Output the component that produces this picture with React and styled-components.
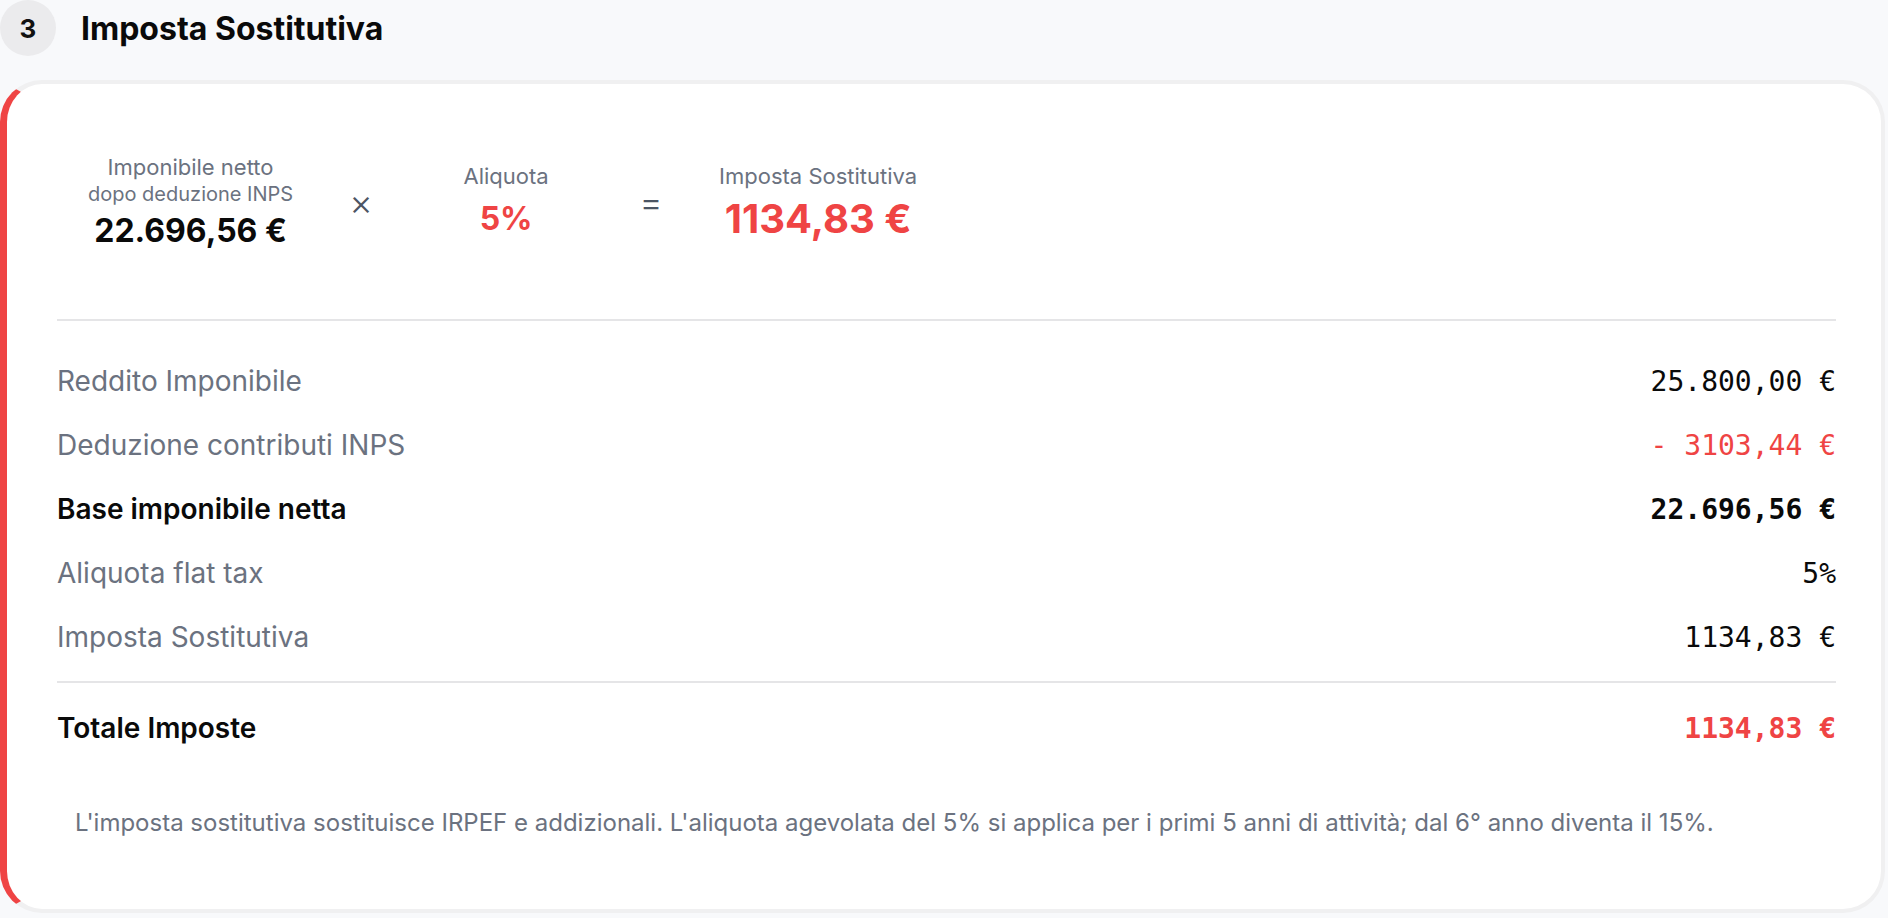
import React from 'react';
import styled, { createGlobalStyle } from 'styled-components';

const GlobalStyle = createGlobalStyle`
  html, body {
    margin: 0;
    padding: 0;
    background: #f8f9fb;
    font-family: Inter, "Noto Sans", sans-serif;
  }
`;

const Page = styled.div`
  width: 1888px;
  padding: 0 3px 6px 0;
  box-sizing: border-box;
`;

const Header = styled.div`
  display: flex;
  align-items: center;
  gap: 25px;
  height: 56px;
`;

const StepBadge = styled.div`
  width: 56px;
  height: 56px;
  border-radius: 50%;
  background: #ebebed;
  display: flex;
  align-items: center;
  justify-content: center;
  font-size: 26px;
  font-weight: 700;
  color: #111;
`;

const Title = styled.h2`
  margin: 0;
  font-size: 32px;
  font-weight: 700;
  color: #0a0a0a;
`;

const Card = styled.div`
  margin-top: 24px;
  background: #fff;
  border: 4px solid #f0f0f1;
  border-left: 7px solid #ef4444;
  border-radius: 42px;
  padding: 70px 45px 70px 50px;
`;

const Formula = styled.div`
  display: flex;
  align-items: center;
  gap: 48px;
  padding-left: 31px;
`;

const Term = styled.div`
  display: flex;
  flex-direction: column;
  align-items: center;
  text-align: center;
  min-width: ${(p) => p.$min || 0}px;
  transform: translateY(${(p) => (p.$lift ? -2 : 0)}px);
`;

const TermLabel = styled.div`
  font-size: ${(p) => (p.$small ? 20 : 22)}px;
  line-height: 27px;
  color: #6b7280;
`;

const TermValue = styled.div`
  margin-top: ${(p) => p.$gap || 4}px;
  font-size: ${(p) => (p.$big ? 40 : 32)}px;
  line-height: 38px;
  font-weight: 700;
  color: ${(p) => (p.$red ? '#ef4444' : '#0a0a0a')};
`;

const Operator = styled.div`
  width: 40px;
  text-align: center;
  font-size: 36px;
  font-weight: 300;
  color: #4b5563;
`;

const Divider = styled.hr`
  margin: ${(p) => p.$top}px 0 ${(p) => p.$bottom}px;
  border: none;
  height: 2px;
  background: #e5e5e7;
`;

const Row = styled.div`
  display: flex;
  align-items: center;
  justify-content: space-between;
  height: 64px;
`;

const RowLabel = styled.div`
  font-size: 28px;
  font-weight: ${(p) => (p.$strong ? 600 : 400)};
  color: ${(p) => (p.$strong ? '#0a0a0a' : '#6b7280')};
`;

const RowValue = styled.div`
  font-family: "DejaVu Sans Mono", "Liberation Mono", monospace;
  font-size: 28px;
  font-weight: ${(p) => (p.$strong ? 700 : 400)};
  color: ${(p) => (p.$red ? '#ef4444' : '#0a0a0a')};
  white-space: pre;
`;

const Note = styled.p`
  margin: 47px 0 0;
  padding: 0 18px;
  font-size: 24px;
  line-height: 32px;
  color: #6b7280;
`;

const rows = [
  { label: 'Reddito Imponibile', value: '25.800,00 €' },
  { label: 'Deduzione contributi INPS', value: '- 3103,44 €', red: true },
  { label: 'Base imponibile netta', value: '22.696,56 €', strong: true },
  { label: 'Aliquota flat tax', value: '5%' },
  { label: 'Imposta Sostitutiva', value: '1134,83 €' },
];

export default function App() {
  return (
    <Page>
      <GlobalStyle />
      <Header>
        <StepBadge>3</StepBadge>
        <Title>Imposta Sostitutiva</Title>
      </Header>
      <Card>
        <Formula>
          <Term>
            <TermLabel>Imponibile netto</TermLabel>
            <TermLabel $small>dopo deduzione INPS</TermLabel>
            <TermValue>22.696,56 €</TermValue>
          </Term>
          <Operator>×</Operator>
          <Term $min={154} $lift>
            <TermLabel>Aliquota</TermLabel>
            <TermValue $red $gap={10}>5%</TermValue>
          </Term>
          <Operator>=</Operator>
          <Term $lift>
            <TermLabel>Imposta Sostitutiva</TermLabel>
            <TermValue $red $big $gap={10}>1134,83 €</TermValue>
          </Term>
        </Formula>
        <Divider $top={69} $bottom={28} />
        {rows.map((r) => (
          <Row key={r.label}>
            <RowLabel $strong={r.strong}>{r.label}</RowLabel>
            <RowValue $strong={r.strong} $red={r.red}>{r.value}</RowValue>
          </Row>
        ))}
        <Divider $top={12} $bottom={13} />
        <Row>
          <RowLabel $strong>Totale Imposte</RowLabel>
          <RowValue $strong $red>1134,83 €</RowValue>
        </Row>
        <Note>
          L'imposta sostitutiva sostituisce IRPEF e addizionali. L'aliquota agevolata del 5% si applica per i primi 5 anni di attività; dal 6° anno diventa il 15%.
        </Note>
      </Card>
    </Page>
  );
}
